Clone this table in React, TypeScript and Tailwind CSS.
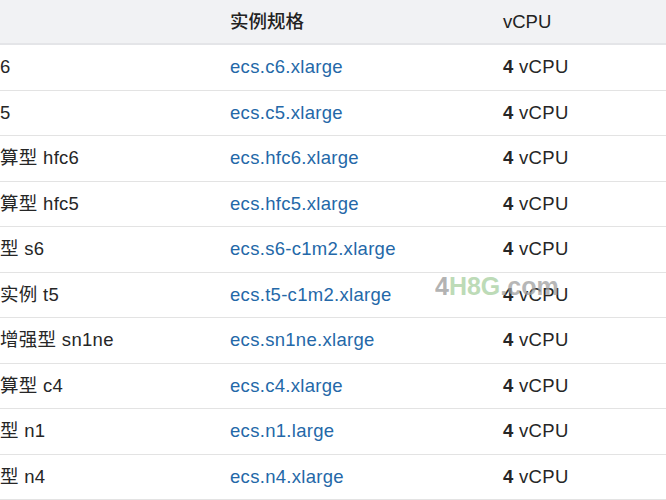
const rows = [
  { name: "6", spec: "ecs.c6.xlarge" },
  { name: "5", spec: "ecs.c5.xlarge" },
  { name: "算型 hfc6", spec: "ecs.hfc6.xlarge" },
  { name: "算型 hfc5", spec: "ecs.hfc5.xlarge" },
  { name: "型 s6", spec: "ecs.s6-c1m2.xlarge" },
  { name: "实例 t5", spec: "ecs.t5-c1m2.xlarge" },
  { name: "增强型 sn1ne", spec: "ecs.sn1ne.xlarge" },
  { name: "算型 c4", spec: "ecs.c4.xlarge" },
  { name: "型 n1", spec: "ecs.n1.large" },
  { name: "型 n4", spec: "ecs.n4.xlarge" },
];

const App = () => {
  return (
    <div
      className="relative w-[666px] h-[500px] overflow-hidden bg-white text-[18.5px] text-[#262626]"
      style={{ fontFamily: '"Liberation Sans", "Noto Sans CJK SC", sans-serif' }}
    >
      {/* header */}
      <div className="flex h-[45px] items-center bg-[#f1f2f4] border-b-2 border-[#e4e5e8]">
        <div className="w-[230px]"></div>
        <div className="w-[273px] font-medium text-[#222]">实例规格</div>
        <div className="flex-1 font-medium text-[#222]">vCPU</div>
      </div>

      {rows.map((r) => (
        <div
          key={r.spec}
          className="flex h-[45.5px] items-center border-b border-[#e3e3e3] tracking-[0.3px]"
        >
          <div className="w-[230px] whitespace-nowrap">{r.name}</div>
          <div className="w-[273px] whitespace-nowrap text-[#2468a8]">{r.spec}</div>
          <div className="flex-1 whitespace-nowrap">
            <span className="font-bold">4</span> vCPU
          </div>
        </div>
      ))}

      {/* watermark */}
      <div className="absolute left-[435px] top-[274px] text-[25px] leading-none font-bold opacity-75 pointer-events-none">
        <span className="text-[#9a9a9a]">4</span>
        <span className="text-[#a7cf9f]">H8G</span>
        <span className="text-[#a0a0a0]">.com</span>
      </div>
    </div>
  );
};

export default App;
